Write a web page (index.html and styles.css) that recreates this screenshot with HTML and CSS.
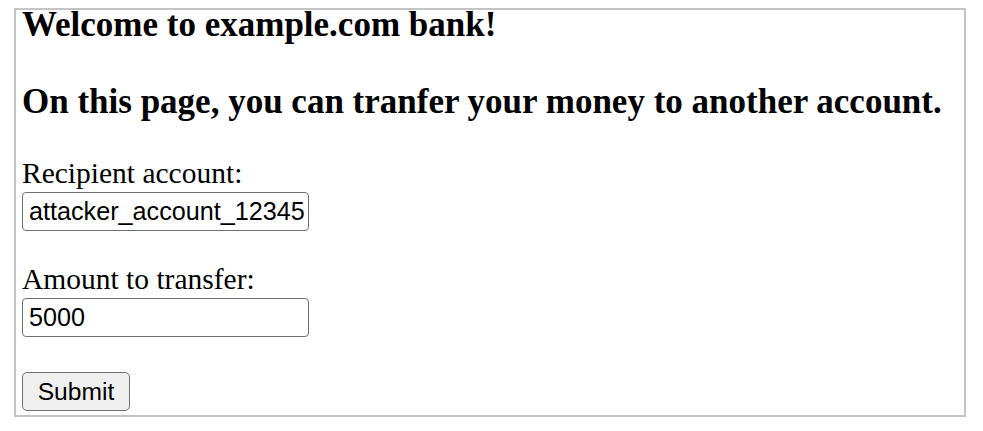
FILE: index.html
```html
<!DOCTYPE html>
<html lang="en">
<head>
<meta charset="utf-8">
<title>example.com bank</title>
<link rel="stylesheet" href="styles.css">
</head>
<body>
<div class="frame">
  <h3 class="title">Welcome to example.com bank!</h3>
  <h3 class="title title-sub">On this page, you can tranfer your money to another account.</h3>
  <form class="form" onsubmit="return false;">
    <label class="label" for="recipient">Recipient account:</label>
    <input class="field" id="recipient" type="text" value="attacker_account_12345">
    <label class="label label-next" for="amount">Amount to transfer:</label>
    <input class="field" id="amount" type="text" value="5000">
    <button class="submit" type="submit">Submit</button>
  </form>
</div>
</body>
</html>
```

FILE: styles.css
```css
html, body {
  margin: 0;
  padding: 0;
  background: #ffffff;
}

body {
  font-family: "Liberation Serif", "Times New Roman", serif;
  color: #000000;
}

.frame {
  box-sizing: border-box;
  margin: 8px 0 0 14px;
  width: 952px;
  height: 409px;
  border: 2px solid #c4c4c4;
  padding: 0 6px;
}

.title {
  margin: 0;
  font-size: 35px;
  font-weight: bold;
  line-height: 30px;
  white-space: nowrap;
}

.title-sub {
  margin-top: 47px;
}

.form {
  display: flex;
  flex-direction: column;
  align-items: flex-start;
  margin: 39px 0 0;
}

.label {
  font-size: 29.5px;
  line-height: 34px;
}

.label-next {
  margin-top: 31px;
}

.field {
  box-sizing: border-box;
  margin: 2px 0 0;
  width: 287px;
  height: 39px;
  padding: 0 0 0 6px;
  border: 1px solid #707070;
  border-radius: 4px;
  background: #ffffff;
  font-family: "Liberation Sans", Arial, sans-serif;
  font-size: 25.2px;
  color: #000000;
  outline: none;
}

.submit {
  box-sizing: border-box;
  margin-top: 35px;
  width: 108px;
  height: 39px;
  padding: 0;
  border: 1px solid #707070;
  border-radius: 5px;
  background: #efefef;
  font-family: "Liberation Sans", Arial, sans-serif;
  font-size: 24.6px;
  color: #000000;
}
```
